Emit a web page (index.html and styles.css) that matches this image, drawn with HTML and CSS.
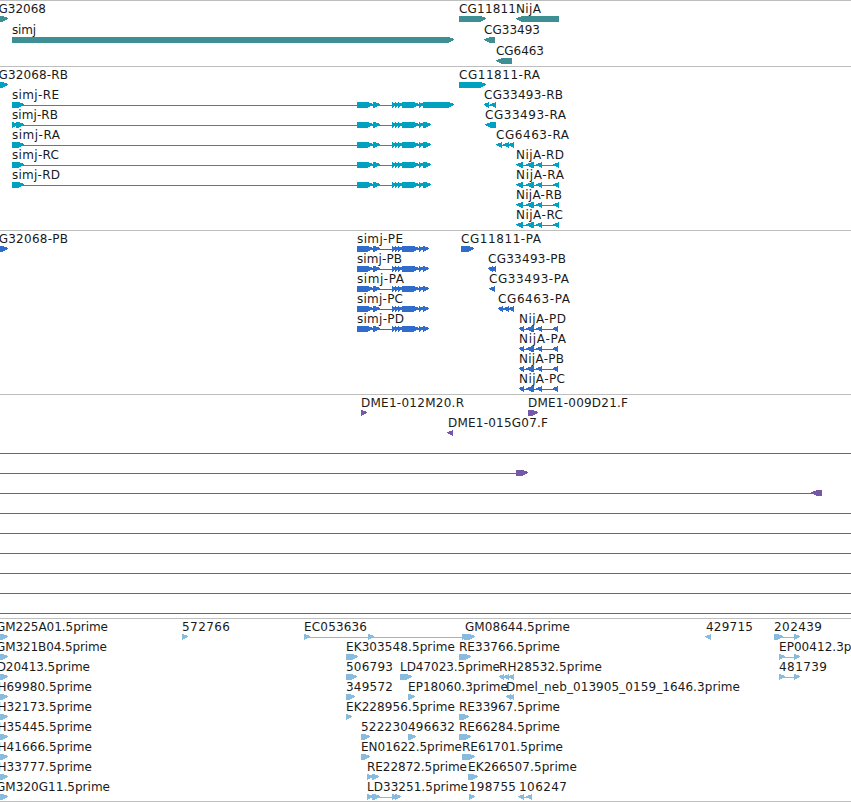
FILE: index.html
```
<!DOCTYPE html>
<html lang="en">
<head>
    <meta charset="UTF-8">
    <title>Genome browser</title>
    <link rel="stylesheet" href="styles.css">
</head>
<body>

    <div class="browser" id="browser"></div>

    <script>
    // feature: [label, label start, label end, direction, [[start, end], ...]]
    const exons = [[357, 373], [373, 380], [392, 396], [395, 399], [398, 403], [402, 419], [419, 424]];
    const rna = [[12, 24], ...exons, [423, 431]];
    const cds = [...exons, [423, 429]];
    const nijaR = [[516, 523], [526, 534], [536, 542], [553, 559]];
    const nijaP = [[519, 524], [526, 534], [536, 542], [553, 558]];
    const edge = [[-4, 5], [-1, 8]];
    const span = [['', 0, 0, 1, [[-20, -10], [900, 910]]]];

    const tracks = [
      { name: 'genes', pitch: 21, rows: [
        [['CG32068', -10, 46, 1, [[-4, 8]]], ['CG11811', 459, 516, 1, [[459, 486]]], ['NijA', 516, 541, -1, [[516, 559]]]],
        [['simj', 12, 36, 1, [[12, 454]]], ['CG33493', 484, 540, -1, [[484, 495]]]],
        [['CG6463', 496, 544, -1, [[496, 512]]]]
      ]},
      { name: 'transcripts', pitch: 20, rows: [
        [['CG32068-RB', -10, 68, 1, edge], ['CG11811-RA', 459, 540, 1, [[459, 486]]]],
        [['simj-RE', 12, 59, 1, [[12, 24], ...exons, [423, 454]]], ['CG33493-RB', 484, 563, -1, [[484, 489], [490, 496]]]],
        [['simj-RB', 12, 58, 1, [[12, 18], [16, 24], ...exons, [423, 431]]], ['CG33493-RA', 485, 566, -1, [[485, 496]]]],
        [['simj-RA', 12, 60, 1, rna], ['CG6463-RA', 496, 569, -1, [[496, 502], [503, 509], [508, 514]]]],
        [['simj-RC', 12, 59, 1, rna], ['NijA-RD', 516, 564, -1, nijaR]],
        [['simj-RD', 12, 60, 1, rna], ['NijA-RA', 516, 564, -1, nijaR]],
        [['NijA-RB', 516, 562, -1, nijaR]],
        [['NijA-RC', 516, 563, -1, nijaR]]
      ]},
      { name: 'proteins', pitch: 20, rows: [
        [['CG32068-PB', -10, 68, 1, edge], ['simj-PE', 357, 403, 1, cds], ['CG11811-PA', 461, 541, 1, [[461, 474]]]],
        [['simj-PB', 357, 402, 1, cds], ['CG33493-PB', 488, 566, -1, [[488, 493], [490, 496]]]],
        [['simj-PA', 357, 404, 1, cds], ['CG33493-PA', 489, 569, -1, [[489, 495]]]],
        [['simj-PC', 357, 403, 1, cds], ['CG6463-PA', 498, 570, -1, [[498, 503], [503, 509], [508, 514]]]],
        [['simj-PD', 357, 404, 1, cds], ['NijA-PD', 519, 566, -1, nijaP]],
        [['NijA-PA', 519, 566, -1, nijaP]],
        [['NijA-PB', 519, 564, -1, nijaP]],
        [['NijA-PC', 519, 565, -1, nijaP]]
      ]},
      { name: 'bacs', pitch: 20, rows: [
        [['DME1-012M20.R', 361, 464, 1, [[361, 367]]], ['DME1-009D21.F', 528, 628, 1, [[528, 538]]]],
        [['DME1-015G07.F', 448, 548, -1, [[447, 453]]]],
        span,
        [['', 0, 0, 1, [[-20, -10], [516, 528]]]],
        [['', 0, 0, -1, [[-20, -10], [811, 822]]]],
        span, span, span, span, span, span
      ]},
      { name: 'ests', pitch: 20, rows: [
        [['GM225A01.5prime', -4, 108, 1, edge], ['572766', 182, 230, 1, [[182, 188]]],
         ['EC053636', 304, 367, 1, [[304, 310], [368, 374], [462, 468], [464, 475]]], ['GM08644.5prime', 465, 570, 1, []],
         ['429715', 706, 753, -1, [[705, 711]]], ['202439', 774, 822, 1, [[774, 783], [794, 800]]]],
        [['GM321B04.5prime', -4, 107, 1, edge], ['EK303548.5prime', 346, 455, 1, [[346, 358]]],
         ['RE33766.5prime', 459, 560, 1, [[459, 471]]], ['EP00412.3prime', 779, 879, 1, [[779, 785], [794, 800]]]],
        [['LD20413.5prime', -10, 90, 1, edge], ['506793', 346, 393, 1, [[346, 357]]], ['LD47023.5prime', 400, 500, 1, [[400, 412]]],
         ['RH28532.5prime', 499, 602, -1, [[499, 504], [503, 509], [508, 514]]], ['481739', 779, 827, 1, [[779, 785], [794, 800]]]],
        [['RH69980.5prime', -11, 92, 1, edge], ['349572', 346, 393, 1, [[346, 355]]], ['EP18060.3prime', 408, 508, 1, [[408, 415]]],
         ['Dmel_neb_013905_0159_1646.3prime', 506, 740, -1, [[506, 511], [508, 514]]]],
        [['RH32173.5prime', -11, 92, 1, edge], ['EK228956.5prime', 346, 455, 1, [[346, 352]]], ['RE33967.5prime', 459, 560, 1, [[459, 469]]]],
        [['RH35445.5prime', -11, 92, 1, edge], ['522230', 361, 408, 1, [[361, 370]]], ['496632', 408, 455, 1, [[408, 416]]],
         ['RE66284.5prime', 459, 560, 1, [[459, 471]]]],
        [['RH41666.5prime', -11, 92, 1, edge], ['EN01622.5prime', 361, 462, 1, [[361, 370]]], ['RE61701.5prime', 462, 563, 1, [[462, 475]]]],
        [['RH33777.5prime', -11, 92, 1, edge], ['RE22872.5prime', 367, 467, 1, [[367, 373], [372, 379]]],
         ['EK266507.5prime', 468, 577, 1, [[468, 478]]]],
        [['GM320G11.5prime', -4, 110, 1, edge], ['LD33251.5prime', 367, 468, 1, [[367, 373], [372, 380], [392, 398], [395, 401]]],
         ['198755', 469, 516, 1, [[469, 475]]], ['106247', 519, 567, -1, [[518, 524], [526, 532]]]]
      ]}
    ];

    // block with a pointed end, 6px high
    function arrow(start, end, dir, y) {
      const head = Math.min(end - start, 6);
      const tip = dir > 0 ? end : start;
      const tail = dir > 0 ? start : end;
      const neck = tip - dir * head;
      return `<polygon class="shape" points="${tail},${y} ${neck},${y} ${tip},${y + 2} ${tip},${y + 3} ${neck},${y + 6} ${tail},${y + 6}"/>`;
    }

    function drawFeature([label, x1, x2, dir, parts], top) {
      let out = '';
      if (label) {
        out += `<text x="${x1}" y="${top + 12}" textLength="${x2 - x1}">${label}</text>`;
      }
      if (parts.length > 1) {
        const from = parts[0][0] + 2;
        const to = parts[parts.length - 1][1] - 2;
        out += `<rect class="shape" x="${from}" y="${top + 18}" width="${to - from}" height="1"/>`;
      }
      parts.forEach(([start, end]) => {
        out += arrow(start, end, dir, top + 15);
      });
      return out;
    }

    const browser = document.getElementById('browser');
    tracks.forEach(track => {
      const el = document.createElement('div');
      el.classList.add('track', track.name);
      const shapes = track.rows.map((row, i) => row.map(f => drawFeature(f, i * track.pitch)).join('')).join('');
      el.innerHTML = `<svg>${shapes}</svg>`;
      browser.appendChild(el);
    });
    </script>
</body>
</html>
```
FILE: styles.css
```
body {
    margin: 0;
    background-color: #fff;
    overflow: hidden;
}

.browser {
    display: flex;
    flex-direction: column;
    width: 851px;
    border-bottom: 1px solid #bebebe;
}

.track {
    box-sizing: border-box;
    border-top: 1px solid #bebebe;
}

    .track svg {
        display: block;
        width: 100%;
        height: 100%;
        overflow: hidden;
    }

    .track text {
        font-family: "DejaVu Sans", sans-serif;
        font-size: 12px;
        fill: #1a1a1a;
    }

.shape {
    shape-rendering: crispEdges;
    fill: currentColor;
}

.genes {
    height: 66px;
    color: #3d8f94;
}

.transcripts {
    height: 164px;
    color: #00a0c0;
}

.proteins {
    height: 164px;
    color: #306ccc;
}

.bacs {
    height: 224px;
    color: #7459a8;
}

.ests {
    height: 183px;
    color: #87bcde;
}
```
